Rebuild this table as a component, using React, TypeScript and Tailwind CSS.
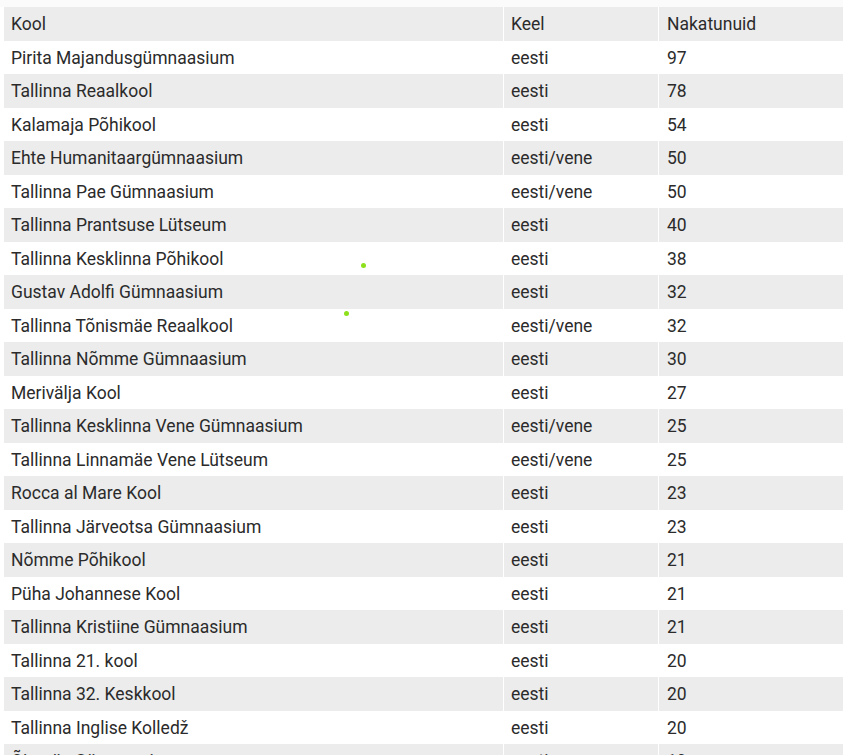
import React from "react";

const rows: [string, string, string][] = [
  ["Pirita Majandusgümnaasium", "eesti", "97"],
  ["Tallinna Reaalkool", "eesti", "78"],
  ["Kalamaja Põhikool", "eesti", "54"],
  ["Ehte Humanitaargümnaasium", "eesti/vene", "50"],
  ["Tallinna Pae Gümnaasium", "eesti/vene", "50"],
  ["Tallinna Prantsuse Lütseum", "eesti", "40"],
  ["Tallinna Kesklinna Põhikool", "eesti", "38"],
  ["Gustav Adolfi Gümnaasium", "eesti", "32"],
  ["Tallinna Tõnismäe Reaalkool", "eesti/vene", "32"],
  ["Tallinna Nõmme Gümnaasium", "eesti", "30"],
  ["Merivälja Kool", "eesti", "27"],
  ["Tallinna Kesklinna Vene Gümnaasium", "eesti/vene", "25"],
  ["Tallinna Linnamäe Vene Lütseum", "eesti/vene", "25"],
  ["Rocca al Mare Kool", "eesti", "23"],
  ["Tallinna Järveotsa Gümnaasium", "eesti", "23"],
  ["Nõmme Põhikool", "eesti", "21"],
  ["Püha Johannese Kool", "eesti", "21"],
  ["Tallinna Kristiine Gümnaasium", "eesti", "21"],
  ["Tallinna 21. kool", "eesti", "20"],
  ["Tallinna 32. Keskkool", "eesti", "20"],
  ["Tallinna Inglise Kolledž", "eesti", "20"],
  ["Õismäe Gümnaasium", "eesti", "19"],
];

export default function App() {
  return (
    <div
      className="relative w-[843px] h-[755px] overflow-hidden bg-white pt-[7px] pl-[4px]"
      style={{ fontFamily: "Roboto, 'Liberation Sans', sans-serif" }}
    >
      <div className="absolute top-0 left-0 w-full h-[7px] bg-[#fbfbfb]" />
      <div className="w-[845px] text-[17.5px] leading-[25.5px] text-[#2b2b2b]">
        <div className="flex bg-[#ececec]">
          <div className="w-[500px] px-[7px] pt-[5px] pb-[3px] border-r border-white">Kool</div>
          <div className="w-[155px] px-[7px] pt-[5px] pb-[3px] border-r border-white">Keel</div>
          <div className="flex-1 px-[8px] pt-[5px] pb-[3px]">Nakatunuid</div>
        </div>
        {rows.map((r, i) => (
          <div key={i} className={`flex ${i % 2 === 1 ? "bg-[#ececec]" : "bg-white"}`}>
            <div className="w-[500px] px-[7px] pt-[5px] pb-[3px] border-r border-white">{r[0]}</div>
            <div className="w-[155px] px-[7px] pt-[5px] pb-[3px] border-r border-white">{r[1]}</div>
            <div className="flex-1 px-[8px] pt-[5px] pb-[3px]">{r[2]}</div>
          </div>
        ))}
      </div>
      <div className="absolute left-[361px] top-[263px] w-[5px] h-[5px] rounded-full bg-[#8ee01c]" />
      <div className="absolute left-[344px] top-[311px] w-[5px] h-[5px] rounded-full bg-[#8ee01c]" />
    </div>
  );
}
